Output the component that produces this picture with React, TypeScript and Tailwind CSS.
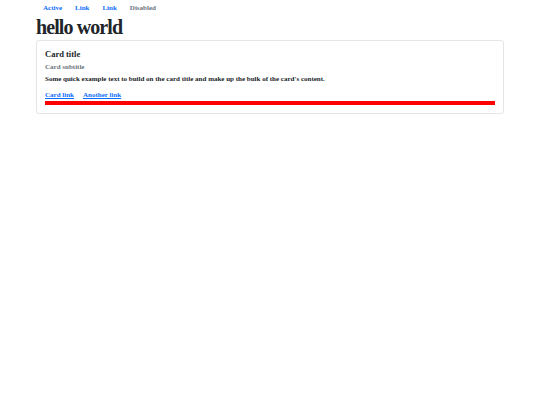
export default function App() {
  return (
    <div className="min-h-[405px] bg-white font-['Liberation_Serif',serif] text-[#212529]">
      <div className="mx-auto w-[468px] pt-[2px]">
        <nav className="flex gap-[13px] pl-[7px] text-[7px] font-bold leading-[12px]">
          <a className="text-[#0d6efd]">Active</a>
          <a className="text-[#0d6efd]">Link</a>
          <a className="text-[#0d6efd]">Link</a>
          <span className="text-[#6c757d]">Disabled</span>
        </nav>
        <h1 className="text-[20px] font-bold leading-[26px] tracking-[-0.9px]">hello world</h1>
        <div className="rounded-[3px] border border-[#e5e5e5] px-[8px] pt-[7px] pb-[8px]">
          <h5 className="text-[8.5px] font-bold leading-[12px]">Card title</h5>
          <h6 className="mt-[1px] text-[7px] font-bold leading-[12px] text-[#6c757d]">Card subtitle</h6>
          <p className="text-[7px] font-bold leading-[12px]">
            Some quick example text to build on the card title and make up the bulk of the card's content.
          </p>
          <div className="mt-[5px] flex gap-[9px] text-[7px] font-bold leading-[10px]">
            <a className="text-[#0d6efd] underline">Card link</a>
            <a className="text-[#0d6efd] underline">Another link</a>
          </div>
          <div className="mt-[1px] h-[4px] bg-[#ff0000]" />
        </div>
      </div>
    </div>
  );
}
